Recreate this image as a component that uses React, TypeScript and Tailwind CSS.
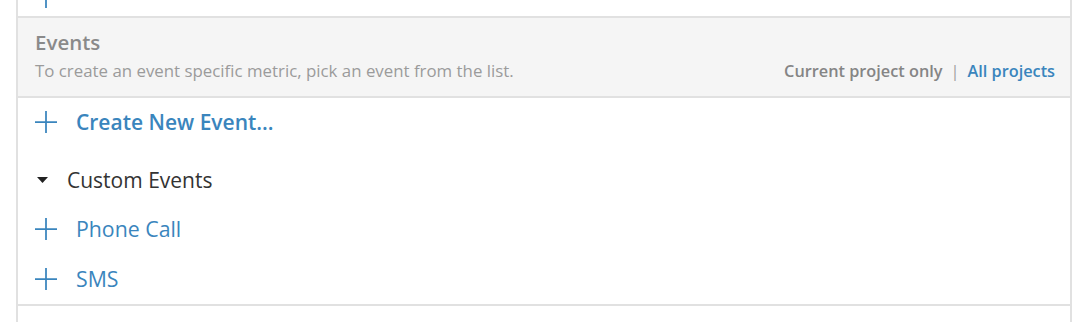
import React from "react";

const PlusIcon = ({ className = "" }: { className?: string }) => (
  <svg
    width="22"
    height="22"
    viewBox="0 0 22 22"
    className={className}
    aria-hidden="true"
  >
    <path d="M11 0v22M0 11h22" stroke="#3a85bd" strokeWidth="1.75" fill="none" />
  </svg>
);

const EventRow = ({ label }: { label: string }) => (
  <div className="flex h-[50px] items-center pl-[17px]">
    <PlusIcon />
    <span className="ml-[19px] text-[21.3px] leading-[24px] text-[#3a85bd]">{label}</span>
  </div>
);

export default function App() {
  return (
    <div className="flex h-[322px] w-[1088px] overflow-hidden bg-white font-['Open_Sans',sans-serif]">
      <div className="ml-4 flex w-[1056px] flex-col border-x-2 border-[#e1e1e1]">
        {/* tail of the previous list */}
        <div className="h-4 shrink-0 overflow-hidden pl-[17px]">
          <PlusIcon className="-mt-[14px]" />
        </div>

        {/* Events header */}
        <div className="flex h-[82px] shrink-0 flex-col border-y-2 border-[#e1e1e1] bg-[#f5f5f5] pl-[17px] pr-[15px] pt-[12px]">
          <span className="text-[20.5px] font-semibold leading-[24px] text-[#8a8a8a]">
            Events
          </span>
          <div className="mt-[7px] flex items-baseline justify-between leading-[20px]">
            <span className="text-[16.85px] text-[#9b9b9b]">
              To create an event specific metric, pick an event from the list.
            </span>
            <div className="flex items-baseline text-[16.3px] font-semibold">
              <span className="text-[#858585]">Current project only</span>
              <span className="mx-[8px] font-normal text-[#a0a0a0]">|</span>
              <span className="text-[#3a85bd]">All projects</span>
            </div>
          </div>
        </div>

        {/* Event list */}
        <div className="shrink-0 border-b-2 border-[#e1e1e1]">
          <div className="flex h-[48px] items-center pl-[17px]">
            <PlusIcon />
            <span className="ml-[19px] text-[21px] font-semibold leading-[24px] text-[#3a85bd]">
              Create New Event...
            </span>
          </div>
          <div className="flex h-[58px] items-center pl-[19px] pt-[10px]">
            <svg width="11" height="6" viewBox="0 0 11 6" aria-hidden="true">
              <path d="M0 0h11L5.5 6z" fill="#222" />
            </svg>
            <span className="ml-[19px] text-[21px] leading-[24px] text-[#333]">Custom Events</span>
          </div>
          <EventRow label="Phone Call" />
          <EventRow label="SMS" />
        </div>
      </div>
    </div>
  );
}
